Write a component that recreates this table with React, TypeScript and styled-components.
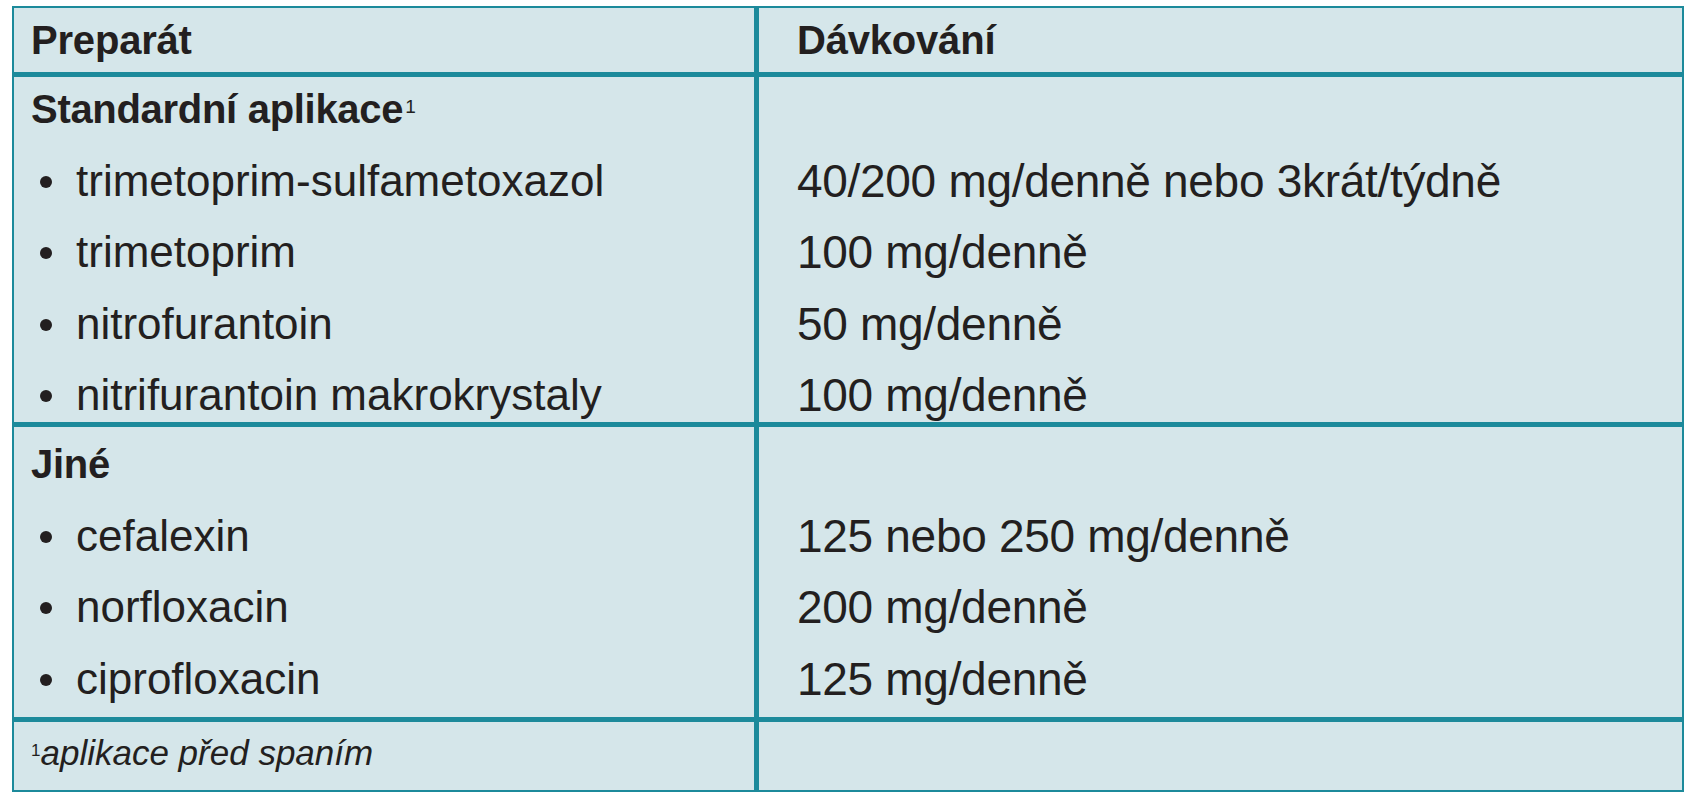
import React from 'react';
import styled, { createGlobalStyle } from 'styled-components';

const TEAL = '#1c8a9b';
const CELL = '#d5e6ea';
const INK = '#231f20';

const Global = createGlobalStyle`
  html, body { margin: 0; padding: 0; background: #ffffff; }
  body {
    font-family: "Liberation Sans", Arial, sans-serif;
    color: ${INK};
  }
`;

const Page = styled.div`
  padding: 6px 0 0 12px;
`;

const Table = styled.div`
  width: 1668px;
  display: grid;
  grid-template-columns: 740px 1fr;
  column-gap: 5px;
  row-gap: 5px;
  background: ${TEAL};
  border: 2px solid ${TEAL};
`;

const Cell = styled.div<{ $side: 'left' | 'right' }>`
  background: ${CELL};
  padding-left: ${(p) => (p.$side === 'left' ? '17px' : '38px')};
  box-sizing: border-box;
`;

const HeadCell = styled(Cell)`
  height: 64px;
  line-height: 64px;
  font-size: 40px;
  font-weight: 700;
  letter-spacing: -0.2px;
`;

const Group = styled(Cell)<{ $top: number; $bottom: number }>`
  display: flex;
  flex-direction: column;
  gap: 17.5px;
  padding-top: ${(p) => p.$top}px;
  padding-bottom: ${(p) => p.$bottom}px;
`;

const SubHead = styled.div`
  height: 54px;
  line-height: 54px;
  font-size: 40px;
  font-weight: 700;
  letter-spacing: -0.3px;
  white-space: nowrap;
`;

const Sup = styled.sup`
  font-size: 19px;
  font-weight: 400;
  vertical-align: 10px;
  line-height: 0;
  margin-left: 2px;
`;

const Item = styled.div`
  height: 54px;
  line-height: 54px;
  font-size: 44px;
  white-space: nowrap;
  padding-left: 9px;
`;

const Bullet = styled.span`
  display: inline-block;
  width: 12px;
  height: 12px;
  border-radius: 50%;
  background: ${INK};
  vertical-align: middle;
  margin-right: 24px;
  position: relative;
  top: -2px;
`;

const Value = styled.div`
  height: 54px;
  line-height: 54px;
  font-size: 46px;
  letter-spacing: -0.3px;
  white-space: nowrap;
`;

const FootCell = styled(Cell)`
  height: 68px;
  line-height: 62px;
  font-size: 35px;
  font-style: italic;
  padding-bottom: 6px;
  white-space: nowrap;
`;

const FootSup = styled.sup`
  font-size: 17px;
  font-style: normal;
  vertical-align: 9px;
  line-height: 0;
`;

type Row = { name: string; dose: string };

const standard: Row[] = [
  { name: 'trimetoprim-sulfametoxazol', dose: '40/200 mg/denně nebo 3krát/týdně' },
  { name: 'trimetoprim', dose: '100 mg/denně' },
  { name: 'nitrofurantoin', dose: '50 mg/denně' },
  { name: 'nitrifurantoin makrokrystaly', dose: '100 mg/denně' },
];

const other: Row[] = [
  { name: 'cefalexin', dose: '125 nebo 250 mg/denně' },
  { name: 'norfloxacin', dose: '200 mg/denně' },
  { name: 'ciprofloxacin', dose: '125 mg/denně' },
];

function Section({
  title,
  sup,
  rows,
  top,
  bottom,
}: {
  title: string;
  sup?: string;
  rows: Row[];
  top: number;
  bottom: number;
}) {
  return (
    <>
      <Group $side="left" $top={top} $bottom={bottom}>
        <SubHead>
          {title}
          {sup && <Sup>{sup}</Sup>}
        </SubHead>
        {rows.map((r) => (
          <Item key={r.name}>
            <Bullet />
            {r.name}
          </Item>
        ))}
      </Group>
      <Group $side="right" $top={top} $bottom={bottom}>
        <Value>{'\u00a0'}</Value>
        {rows.map((r) => (
          <Value key={r.name}>{r.dose}</Value>
        ))}
      </Group>
    </>
  );
}

export default function App() {
  return (
    <>
      <Global />
      <Page>
        <Table>
          <HeadCell $side="left">Preparát</HeadCell>
          <HeadCell $side="right">Dávkování</HeadCell>
          <Section title="Standardní aplikace" sup="1" rows={standard} top={5} bottom={0} />
          <Section title="Jiné" rows={other} top={10} bottom={11.5} />
          <FootCell $side="left">
            <FootSup>1</FootSup>aplikace před spaním
          </FootCell>
          <FootCell $side="right" />
        </Table>
      </Page>
    </>
  );
}
